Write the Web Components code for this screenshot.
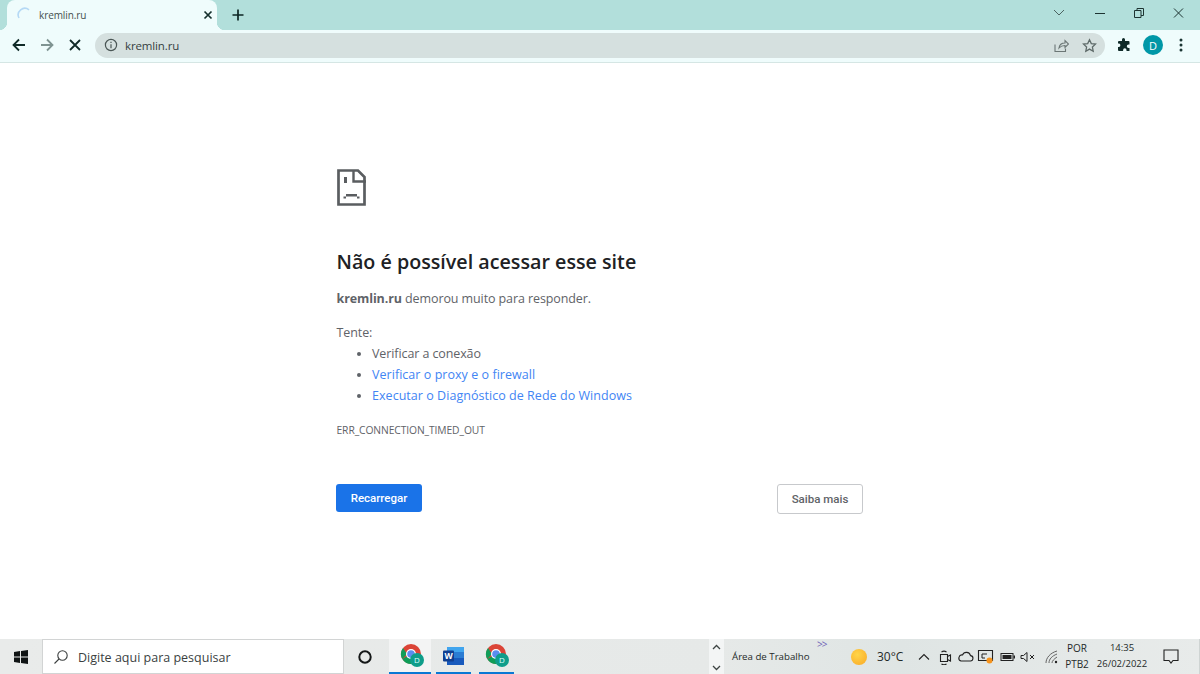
<!DOCTYPE html>
<html lang="pt-BR">
<head>
<meta charset="utf-8">
<title>kremlin.ru</title>
<style>
  html, body { margin: 0; height: 100%; overflow: hidden; }
  body { display: flex; flex-direction: column; height: 674px; font-family: "Open Sans", "Noto Sans", sans-serif; background: #fff; }
</style>
</head>
<body>
<browser-tabstrip></browser-tabstrip>
<browser-toolbar></browser-toolbar>
<error-page></error-page>
<win-taskbar></win-taskbar>

<script>
const FONT = '"Open Sans", "Noto Sans", sans-serif';

class BrowserTabstrip extends HTMLElement {
  constructor() {
    super();
    this.attachShadow({ mode: 'open' }).innerHTML = /*html*/`
    <style>
      :host { display: flex; height: 30px; background: #b2dfdb; font-family: ${FONT}; flex: none; }
      .tab { margin-left: 7px; width: 210px; height: 30px; background: #effcfc; border-radius: 8px 8px 0 0; display: flex; align-items: center; box-sizing: border-box; padding: 0 0 0 10px; position: relative; }
      .tab::before, .tab::after { content: ""; position: absolute; bottom: 0; width: 8px; height: 8px; }
      .tab::before { left: -8px; background: radial-gradient(circle at 0 0, transparent 8px, #effcfc 8.5px); }
      .tab::after { right: -8px; background: radial-gradient(circle at 100% 0, transparent 8px, #effcfc 8.5px); }
      .title { font-size: 10px; color: #45504f; margin-left: 6px; flex: 1; letter-spacing: -.1px; }
      svg { display: block; flex: none; }
      .close { margin-right: 3px; }
      .plus { margin-left: 14px; align-self: center; }
      .spacer { flex: 1; }
      .win { display: flex; align-items: center; height: 30px; margin-top: -2px; }
    </style>
    <div class="tab">
      <svg width="16" height="16" viewBox="0 0 16 16" fill="none"><path d="M2 11 A6.6 6.6 0 0 1 12 2.8" stroke="#b5d9f5" stroke-width="1.6"/></svg>
      <span class="title">kremlin.ru</span>
      <svg class="close" width="12" height="12" viewBox="0 0 12 12" fill="none" stroke="#15302e" stroke-width="1.7"><path d="M2.5 2.5l7 7M9.5 2.5l-7 7"/></svg>
    </div>
    <svg class="plus" width="14" height="14" viewBox="0 0 14 14" fill="none" stroke="#0d2624" stroke-width="1.7"><path d="M7 1.5v11M1.5 7h11"/></svg>
    <div class="spacer"></div>
    <div class="win">
      <svg width="42" height="14" viewBox="0 0 42 14" fill="none" stroke="#4c6361" stroke-width="1"><path d="M17 4l5 5 5-5"/></svg>
      <svg width="40" height="14" viewBox="0 0 40 14" fill="none" stroke="#1d3331" stroke-width="1"><path d="M16 7.5h10"/></svg>
      <svg width="40" height="14" viewBox="0 0 40 14" fill="none" stroke="#1d3331" stroke-width="1"><path d="M15.5 4.5h6.500v7h-6.500zM18 4.500v-2h6.500v7h-2.500"/></svg>
      <svg width="41" height="14" viewBox="0 0 41 14" fill="none" stroke="#1d3331" stroke-width="1"><path d="M15 2.500l9 9M24 2.500l-9 9"/></svg>
    </div>`;
  }
}

class BrowserToolbar extends HTMLElement {
  constructor() {
    super();
    this.attachShadow({ mode: 'open' }).innerHTML = /*html*/`
    <style>
      :host { display: flex; align-items: center; height: 30px; padding-bottom: 2px; background: #effcfc; border-bottom: 1px solid #d5e6e4; font-family: ${FONT}; flex: none; }
      svg { display: block; flex: none; }
      .nav { display: flex; align-items: center; gap: 12px; margin-left: 11px; }
      .omni { margin-left: 12px; width: 1010px; height: 25px; border-radius: 13px; background: #d5e0df; display: flex; align-items: center; box-sizing: border-box; padding: 0 8px 0 9px; }
      .url { font-size: 11.500px; color: #36403f; margin-left: 7px; flex: 1; letter-spacing: -.13px; }
      .omni-end { display: flex; gap: 13px; align-items: center; }
      .avatar { width: 20px; height: 20px; border-radius: 50%; background: #0097a7; color: #fff; font-size: 11px; display: flex; align-items: center; justify-content: center; margin-left: 12px; }
      .ext { margin-left: 12px; }
      .more { margin-left: 10px; }
    </style>
    <div class="nav">
      <svg width="16" height="16" viewBox="0 0 16 16" fill="none" stroke="#102a28" stroke-width="1.800"><path d="M14 8H2.500M8 2.500L2.500 8 8 13.500"/></svg>
      <svg width="16" height="16" viewBox="0 0 16 16" fill="none" stroke="#7f9492" stroke-width="1.800"><path d="M2 8h11.500M8 2.500L13.500 8 8 13.500"/></svg>
      <svg width="16" height="16" viewBox="0 0 16 16" fill="none" stroke="#102a28" stroke-width="1.800"><path d="M3 3l10 10M13 3L3 13" /></svg>
    </div>
    <div class="omni">
      <svg width="14" height="14" viewBox="0 0 14 14" fill="none" stroke="#4a5655" stroke-width="1.200"><circle cx="7" cy="7" r="5.600"/><path d="M7 6.200v4M7 3.700v1.400"/></svg>
      <span class="url">kremlin.ru</span>
      <div class="omni-end">
        <svg width="15" height="15" viewBox="0 0 15 15" fill="none" stroke="#6b7675" stroke-width="1.100"><path d="M1 6.500v7h10.500v-3M5 10c.5-3.500 3-5 6-5V2.500l3.500 3.500L11 9.500V7.500c-2.500 0-4.500.8-6 2.500z"/></svg>
        <svg width="15" height="15" viewBox="0 0 15 15" fill="none" stroke="#5e6a69" stroke-width="1.300"><path d="M7.500 1.700l1.800 3.900 4.200.5-3.100 2.900.8 4.200-3.700-2.100-3.700 2.100.8-4.200-3.100-2.900 4.200-.5z"/></svg>
      </div>
    </div>
    <svg class="ext" width="14" height="14" viewBox="0 0 14 14" fill="#0f2a28"><path d="M5 1.500a1.500 1.500 0 0 1 3 0V3h3.500a1 1 0 0 1 1 1v2.500h-1a1.700 1.700 0 0 0 0 3.400h1V13H9.500v-1a1.700 1.700 0 0 0-3.400 0v1H2a1 1 0 0 1-1-1V9h1a1.800 1.800 0 0 0 0-3.500H1V4a1 1 0 0 1 1-1h3z"/></svg>
    <div class="avatar">D</div>
    <svg class="more" width="16" height="16" viewBox="0 0 16 16" fill="#1b3533"><circle cx="8" cy="3" r="1.500"/><circle cx="8" cy="8" r="1.500"/><circle cx="8" cy="13" r="1.500"/></svg>`;
  }
}

class ErrorPage extends HTMLElement {
  constructor() {
    super();
    this.attachShadow({ mode: 'open' }).innerHTML = /*html*/`
    <style>
      :host { display: block; flex: 1; background: #fff; font-family: ${FONT}; color: #5f6368; font-size: 12.500px; letter-spacing: -.1px; }
      .wrap { width: 527px; margin-left: 336px; padding-top: 106px; }
      svg { display: block; margin-left: 1px; }
      h1 { font-size: 19.700px; font-weight: 600; color: #202124; margin: 42px 0 0; line-height: 28px; letter-spacing: 0; padding-left: .5px; }
      p { margin: 0; line-height: 21px; padding-left: .5px; }
      .why { margin-top: 12px; }
      .why b { font-weight: 700; }
      .try { margin-top: 13px; }
      ul { margin: 0; padding: 0 0 0 36px; list-style: disc; }
      li { line-height: 21px; }
      a { color: #4285f4; text-decoration: none; letter-spacing: .04px; }
      .code { font-size: 10.300px; margin-top: 17px; line-height: 14px; letter-spacing: -.1px; padding-left: .5px; }
      .buttons { display: flex; justify-content: space-between; align-items: flex-start; margin-top: 47px; }
      .btn { font-family: "Roboto", sans-serif; font-size: 11.500px; font-weight: 500; border-radius: 3px; box-sizing: border-box; display: flex; align-items: center; justify-content: center; letter-spacing: 0; }
      .primary { width: 86px; height: 28px; background: #1a73e8; color: #fff; }
      .secondary { width: 86px; height: 30px; background: #fff; color: #5f6368; border: 1.500px solid #c7c9cc; }
    </style>
    <div class="wrap">
      <svg width="29" height="37" viewBox="0 0 29 37" fill="none"><path d="M1.500 1.500H21L27.500 8V35.500H1.500Z" stroke="#5a5d60" stroke-width="2.700"/><path d="M16.500 1.500V12.500H29" stroke="#5a5d60" stroke-width="2.400"/><path d="M7 8h3v6H7zM9 25h11v2.500H9zM6.500 27.500H9v2H6.500zM20 27.500h2.500v2H20z" fill="#5a5d60"/></svg>
      <h1>Não é possível acessar esse site</h1>
      <p class="why"><b>kremlin.ru</b> demorou muito para responder.</p>
      <p class="try">Tente:</p>
      <ul>
        <li>Verificar a conexão</li>
        <li><a>Verificar o proxy e o firewall</a></li>
        <li><a>Executar o Diagnóstico de Rede do Windows</a></li>
      </ul>
      <div class="code">ERR_CONNECTION_TIMED_OUT</div>
      <div class="buttons">
        <div class="btn primary">Recarregar</div>
        <div class="btn secondary">Saiba mais</div>
      </div>
    </div>`;
  }
}

const chromeIcon = /*html*/`
  <svg width="26" height="26" viewBox="0 0 26 26">
    <circle cx="11" cy="11" r="10" fill="#db4437"/>
    <path d="M11 11L2.300 16A10 10 0 0 0 11 21z" fill="#0f9d58"/>
    <path d="M2.300 16A10 10 0 0 1 3 5L7 11z" fill="#0f9d58"/>
    <path d="M11 11h9.700A10 10 0 0 1 11 21z" fill="#f4b400"/>
    <circle cx="11" cy="11" r="5" fill="#fff"/><circle cx="11" cy="11" r="3.800" fill="#5b8def"/>
    <circle cx="17" cy="17" r="7" fill="#0f9d8a"/>
    <text x="17" y="20" font-size="8" fill="#dff" text-anchor="middle" font-family="Open Sans">D</text>
  </svg>`;

class WinTaskbar extends HTMLElement {
  constructor() {
    super();
    this.attachShadow({ mode: 'open' }).innerHTML = /*html*/`
    <style>
      :host { display: flex; align-items: stretch; height: 35px; flex: none; background: linear-gradient(90deg, #e9ebea, #e6e9e8 60%, #dfe5e4 75%, #e8ebea); font-family: ${FONT}; color: #1f2a29; font-size: 11px; }
      svg { display: block; flex: none; }
      .start { width: 42px; display: flex; align-items: center; justify-content: center; }
      .search { width: 302px; background: #fff; border: 1px solid #d2d4d4; box-sizing: border-box; display: flex; align-items: center; padding-left: 10px; font-size: 12.500px; color: #3b3f3f; }
      .search span { margin-left: 9px; padding-top: 1px; }
      .cortana { width: 45px; box-sizing: border-box; padding-right: 3px; display: flex; align-items: center; justify-content: center; }
      .app { display: flex; align-items: center; justify-content: center; box-sizing: border-box; border-bottom: 2px solid #0a78d4; padding-top: 1px; }
      .app.active { width: 42px; background: #f3f4f4; padding-left: 5px; }
      .word { width: 35px; margin-left: 5px; padding-left: 1px; }
      .chrome2 { width: 35px; margin-left: 8px; padding-left: 3px; }
      .gap { width: 195px; }
      .scroll { width: 15px; background: #f3f5f5; display: flex; flex-direction: column; justify-content: space-between; align-items: center; padding: 5px 0 3px; box-sizing: border-box; }
      .desk { width: 128px; position: relative; padding-left: 8px; box-sizing: border-box; display: flex; align-items: center; font-size: 9.700px; }
      .more { position: absolute; left: 93px; top: 0; font-size: 10px; line-height: 11px; color: #6f63b8; letter-spacing: -1px; }
      .weather { display: flex; align-items: center; width: 61px; font-size: 12px; }
      .sun { width: 16px; height: 16px; border-radius: 50%; background: radial-gradient(circle at 40% 35%, #ffd54a, #f9a825); margin-right: 10px; margin-left: -1px; }
      .tray { display: flex; align-items: center; }
      .wifi { margin-left: 3px; }
      .lang { width: 30px; padding-top: 1px; display: flex; flex-direction: column; align-items: center; font-size: 10px; line-height: 16px; }
      .clock { width: 60px; padding-top: 1px; display: flex; flex-direction: column; align-items: center; font-size: 9.500px; line-height: 16px; }
      .bell { margin-left: 11px; }
      .edge { margin-left: 20px; width: 1px; background: #cfd4d3; }
    </style>
    <div class="start">
      <svg width="14" height="14" viewBox="0 0 14 14" fill="#101414"><path d="M0 2l6-.9V6.600H0zM7 .9L14 0v6.600H7zM0 7.400h6v5.500L0 12zM7 7.400h7V14l-7-1z"/></svg>
    </div>
    <div class="search">
      <svg width="16" height="16" viewBox="0 0 16 16" fill="none" stroke="#3b3f3f" stroke-width="1.100"><circle cx="9.500" cy="6.500" r="4.700"/><path d="M6 10l-4.500 4.500"/></svg>
      <span>Digite aqui para pesquisar</span>
    </div>
    <div class="cortana">
      <svg width="14" height="14" viewBox="0 0 14 14" fill="none" stroke="#151818" stroke-width="2"><circle cx="7" cy="7" r="5.700"/></svg>
    </div>
    <div class="app active">${chromeIcon}</div>
    <div class="app word">
      <svg width="22" height="20" viewBox="0 0 22 20">
        <rect x="4" y="1" width="17" height="18" rx="1" fill="#2b7cd3"/>
        <rect x="4" y="1" width="17" height="5" fill="#41a5ee"/>
        <rect x="4" y="12" width="17" height="7" fill="#185abd"/>
        <rect x="0" y="4.500" width="11" height="11" rx="1" fill="#103f91"/>
        <text x="5.500" y="13" font-size="8.500" font-weight="700" fill="#fff" text-anchor="middle" font-family="Open Sans">W</text>
      </svg>
    </div>
    <div class="app chrome2">${chromeIcon}</div>
    <div class="gap"></div>
    <div class="scroll">
      <svg width="9" height="6" viewBox="0 0 9 6" fill="none" stroke="#3d4443" stroke-width="1.300"><path d="M1 5l3.500-3.500L8 5"/></svg>
      <svg width="9" height="6" viewBox="0 0 9 6" fill="none" stroke="#3d4443" stroke-width="1.300"><path d="M1 1l3.500 3.500L8 1"/></svg>
    </div>
    <div class="desk">Área de Trabalho<span class="more">&gt;&gt;</span></div>
    <div class="weather"><div class="sun"></div><span>30°C</span></div>
    <div class="tray">
      <svg width="22" height="14" viewBox="0 0 22 14" fill="none" stroke="#222" stroke-width="1.100"><path d="M6 9.500l5-5 5 5"/></svg>
      <svg width="20" height="16" viewBox="0 0 20 16" fill="none" stroke="#222" stroke-width="1.100"><path d="M5.500 5.500h7v7h-7zM12.500 7.500l3-1.500v6l-3-1.500M6.500 3c1.500-1 3.500-1 5 0M6.500 15c1.500 1 3.500 1 5 0"/></svg>
      <svg width="20" height="14" viewBox="0 0 20 14" fill="none" stroke="#222" stroke-width="1.100"><path d="M6 11h9a2.700 2.700 0 0 0 .5-5.400A4.200 4.200 0 0 0 7.500 5 3.100 3.100 0 0 0 6 11z"/></svg>
      <svg width="22" height="18" viewBox="0 0 22 18"><path d="M3.500 2.500h14v10h-14z" fill="none" stroke="#222" stroke-width="1.100"/><path d="M7 6h5M7 6v4h3" fill="none" stroke="#222"/><circle cx="14.500" cy="12.500" r="3" fill="#f7941d"/></svg>
      <svg width="21" height="12" viewBox="0 0 21 12"><rect x="4" y="2.500" width="12" height="7" fill="none" stroke="#222"/><rect x="5.500" y="4" width="9" height="4" fill="#222"/><rect x="16.500" y="4.500" width="1.500" height="3" fill="#222"/></svg>
      <svg width="20" height="12" viewBox="0 0 20 12" fill="none" stroke="#222"><path d="M3 4.500h2.500L9 1.500v9l-3.500-3H3zM12 4l4 4M16 4l-4 4"/></svg>
      <svg class="wifi" width="21" height="14" viewBox="0 0 21 14" fill="none" stroke="#555" stroke-width=".9"><path d="M5 13C5 8 9 3 16 1M8 13c0-4 3-7 8-9M11 13c0-2 2-4 5-6"/><circle cx="15" cy="12" r="1.200" fill="#222" stroke="none"/></svg>
    </div>
    <div class="lang"><span>POR</span><span>PTB2</span></div>
    <div class="clock"><span>14:35</span><span>26/02/2022</span></div>
    <div class="tray bell">
      <svg width="16" height="15" viewBox="0 0 16 15" fill="none" stroke="#222" stroke-width="1.100"><path d="M1 1h14v10.500h-5l-2 2.500-2-2.500H1z"/></svg>
    </div>
    <div class="edge"></div>`;
  }
}

customElements.define('browser-tabstrip', BrowserTabstrip);
customElements.define('browser-toolbar', BrowserToolbar);
customElements.define('error-page', ErrorPage);
customElements.define('win-taskbar', WinTaskbar);
</script>
</body>
</html>
